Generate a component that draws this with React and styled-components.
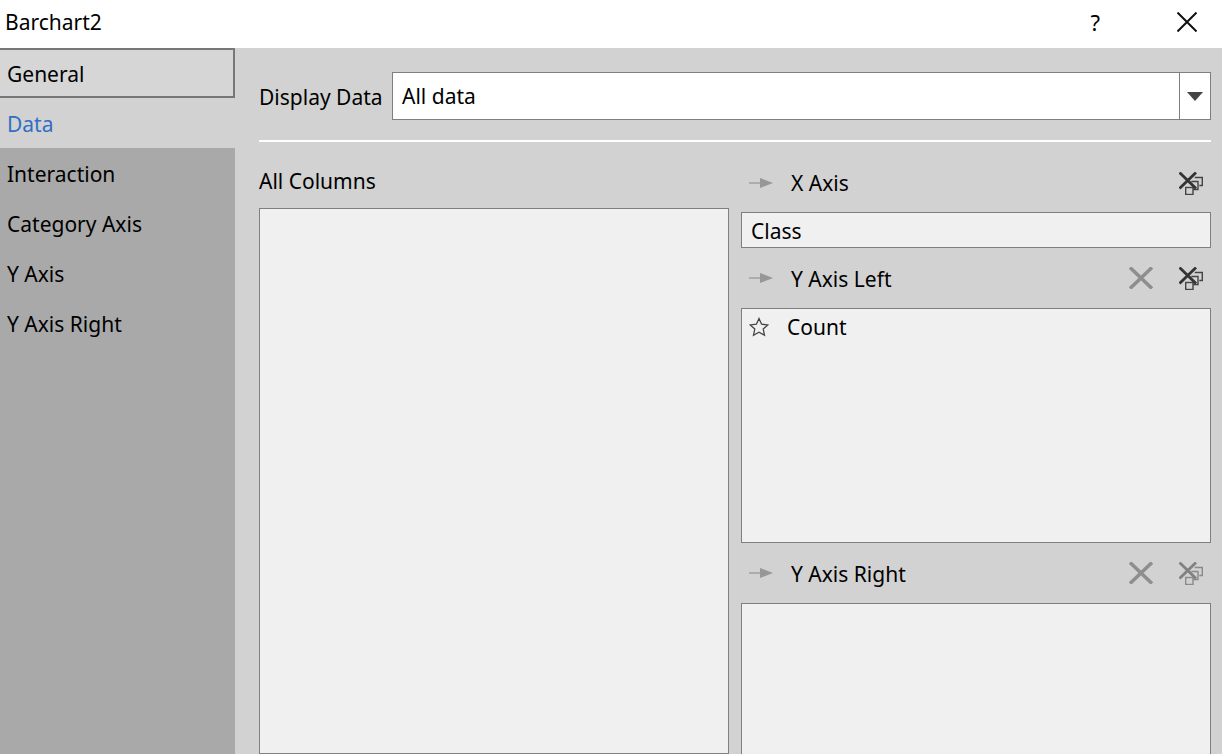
import React from "react";
import styled, { createGlobalStyle } from "styled-components";

const GlobalStyle = createGlobalStyle`
	html, body {
		margin: 0;
		padding: 0;
		height: 100%;
		overflow: hidden;
	}
	body {
		font-family: "Noto Sans", "Open Sans", sans-serif;
		font-size: 21px;
		color: #000;
	}
`;

const Dialog = styled.div`
	width: 1222px;
	height: 754px;
	display: flex;
	flex-direction: column;
	overflow: hidden;
	background-color: #d2d2d2;
`;

const TitleBar = styled.div`
	height: 48px;
	flex: none;
	display: flex;
	align-items: center;
	background-color: #fff;
	padding: 0 25px 4px 5px;
	box-sizing: border-box;
`;

const Title = styled.div`
	flex: 1;
`;

const Help = styled.div`
	margin-right: 77px;
	font-size: 22px;
`;

const Body = styled.div`
	flex: 1;
	min-height: 0;
	display: flex;
`;

const Sidebar = styled.div`
	width: 235px;
	flex: none;
	background-color: #a9a9a9;
`;

const NavItem = styled.div`
	height: 50px;
	box-sizing: border-box;
	display: flex;
	align-items: center;
	padding: 2px 0 0 7px;
	background-color: ${props => props.focused ? "#d6d6d6" : props.active ? "#d2d2d2" : "transparent"};
	border: ${props => props.focused ? "2px solid #777" : "none"};
	border-left: none;
	color: ${props => props.active ? "#2f6fc4" : "#000"};
`;

const Main = styled.div`
	flex: 1;
	min-width: 0;
	padding: 24px 11px 0 24px;
	display: flex;
	flex-direction: column;
`;

const DisplayRow = styled.div`
	display: flex;
	align-items: center;
	height: 48px;
	flex: none;
`;

const DisplayLabel = styled.div`
	width: 133px;
	flex: none;
	padding-top: 2px;
`;

const Select = styled.div`
	flex: 1;
	height: 100%;
	box-sizing: border-box;
	display: flex;
	align-items: center;
	background-color: #fff;
	border: 1px solid #7f7f7f;
`;

const SelectValue = styled.div`
	flex: 1;
	padding: 0 0 0 9px;
`;

const SelectButton = styled.div`
	width: 31px;
	height: 100%;
	box-sizing: border-box;
	border-left: 1px solid #7f7f7f;
	display: flex;
	align-items: center;
	justify-content: center;
`;

const Divider = styled.div`
	height: 2px;
	flex: none;
	margin-top: 20px;
	background-color: #fff;
`;

const Columns = styled.div`
	flex: 1;
	min-height: 0;
	display: grid;
	grid-template-columns: 470px 470px;
	column-gap: 12px;
	margin-top: 16px;
`;

const Column = styled.div`
	display: flex;
	flex-direction: column;
	min-height: 0;
`;

const ColumnLabel = styled.div`
	height: 50px;
	flex: none;
	display: flex;
	align-items: center;
	padding-bottom: 4px;
	box-sizing: border-box;
`;

const AxisHeader = styled.div`
	height: ${props => props.h}px;
	flex: none;
	box-sizing: border-box;
	display: flex;
	align-items: center;
	padding: ${props => props.first ? "0 8px 4px 8px" : "0 8px 0 8px"};
`;

const AxisName = styled.div`
	flex: 1;
	margin-left: 18px;
	padding-top: ${props => props.first ? 0 : 2}px;
`;

const CrossSlot = styled.div`
	display: flex;
	margin-right: 26px;
`;

const ListBox = styled.div`
	box-sizing: border-box;
	background-color: #f0f0f0;
	border: 1px solid #7f7f7f;
	height: ${props => props.h ? `${props.h}px` : "auto"};
	flex: ${props => props.h ? "none" : "1 0 auto"};
	min-height: ${props => props.h ? "0" : "170px"};
`;

const SingleValue = styled(ListBox)`
	display: flex;
	align-items: center;
	padding: 2px 0 0 9px;
`;

const ListRow = styled.div`
	display: flex;
	align-items: center;
	height: 36px;
	padding-left: 7px;
`;

const RowName = styled.div`
	margin-left: 18px;
`;

const ClearSvg = styled.svg`
	display: block;
	flex: none;
	opacity: ${props => props.faded ? 0.5 : 1};
`;

const ArrowIcon = () => (
	<svg width="24" height="12" viewBox="0 0 24 12">
		<path d="M0 6h13" stroke="#a0a0a0" strokeWidth="1.500" />
		<path d="M11 1l13 5-13 5z" fill="#979797" />
	</svg>
);

const CrossIcon = () => (
	<svg width="24" height="22" viewBox="0 0 24 22">
		<path d="M1 .5L23 21.500M23 .5L1 21.500" stroke="#8e8e8e" strokeWidth="3.500" fill="none" />
	</svg>
);

const ClearIcon = ({ faded }) => (
	<ClearSvg width="24" height="23" viewBox="0 0 24 23" faded={faded}>
		<path d="M15.700 5.500h7.600v8h-3" stroke="#444" strokeWidth="1.400" fill="none" />
		<path d="M12.300 9.500h6.700v8h-5" stroke="#444" strokeWidth="1.400" fill="none" />
		<rect x="6.700" y="15.500" width="7.300" height="7" stroke="#444" strokeWidth="1.400" fill="none" />
		<path d="M.5 .5L17 16.500M17 .5L.5 16.500" stroke="#333" strokeWidth="2.800" fill="none" />
	</ClearSvg>
);

const StarIcon = () => (
	<svg width="20" height="20" viewBox="0 0 20 20">
		<path d="M10 1.500l2.600 5.700 6.200.7-4.600 4.200 1.300 6.100L10 15.200l-5.500 3 1.300-6.100-4.600-4.200 6.200-.7z" fill="none" stroke="#444" strokeWidth="1.300" />
	</svg>
);

const navItems = ["General", "Data", "Interaction", "Category Axis", "Y Axis", "Y Axis Right"];

const App = () => (
	<Dialog>
		<GlobalStyle />
		<TitleBar>
			<Title>Barchart2</Title>
			<Help>?</Help>
			<svg width="20" height="20" viewBox="0 0 20 20">
				<path d="M.5 .5l19 19M19.500 .5l-19 19" stroke="#111" strokeWidth="2" fill="none" />
			</svg>
		</TitleBar>
		<Body>
			<Sidebar>
				{navItems.map((name, i) => (
					<NavItem key={name} focused={i === 0} active={i === 1}>{name}</NavItem>
				))}
			</Sidebar>
			<Main>
				<DisplayRow>
					<DisplayLabel>Display Data</DisplayLabel>
					<Select>
						<SelectValue>All data</SelectValue>
						<SelectButton>
							<svg width="16" height="9" viewBox="0 0 16 9">
								<path d="M0 0h16L8 9z" fill="#444" />
							</svg>
						</SelectButton>
					</Select>
				</DisplayRow>
				<Divider />
				<Columns>
					<Column>
						<ColumnLabel>All Columns</ColumnLabel>
						<ListBox />
					</Column>
					<Column>
						<AxisHeader h={54} first>
							<ArrowIcon />
							<AxisName first>X Axis</AxisName>
							<ClearIcon />
						</AxisHeader>
						<SingleValue h={36}>Class</SingleValue>
						<AxisHeader h={60}>
							<ArrowIcon />
							<AxisName>Y Axis Left</AxisName>
							<CrossSlot><CrossIcon /></CrossSlot>
							<ClearIcon />
						</AxisHeader>
						<ListBox h={235}>
							<ListRow>
								<StarIcon />
								<RowName>Count</RowName>
							</ListRow>
						</ListBox>
						<AxisHeader h={60}>
							<ArrowIcon />
							<AxisName>Y Axis Right</AxisName>
							<CrossSlot><CrossIcon /></CrossSlot>
							<ClearIcon faded />
						</AxisHeader>
						<ListBox />
					</Column>
				</Columns>
			</Main>
		</Body>
	</Dialog>
);

export default App;
